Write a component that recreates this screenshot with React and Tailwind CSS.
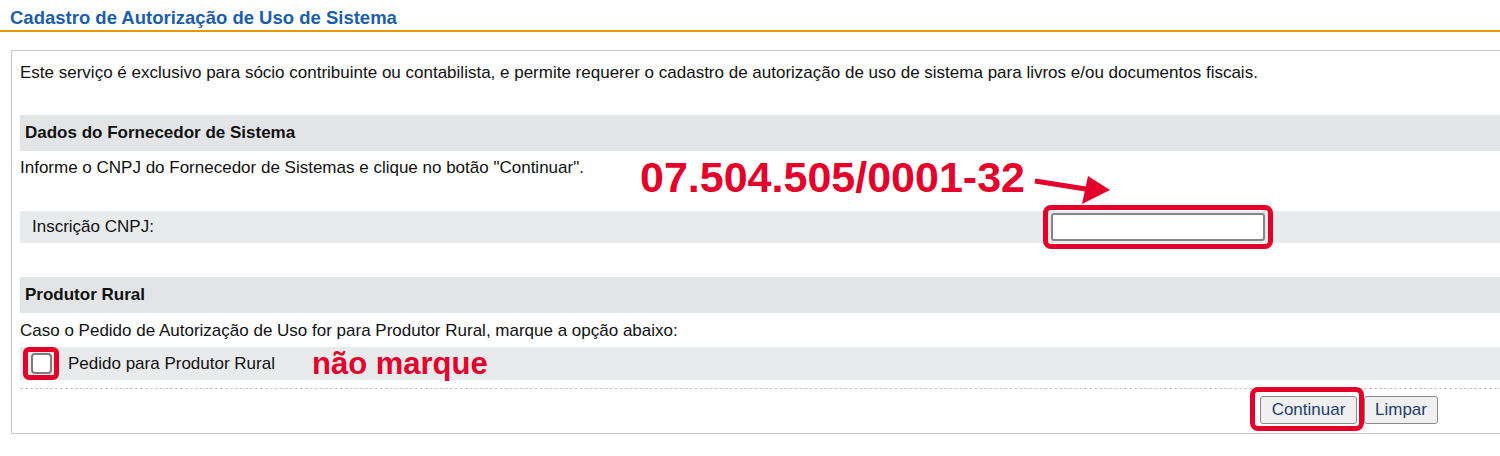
import React from "react";

const RED = "#e4002b";

export default function App() {
  return (
    <div
      className="relative w-[1500px] h-[456px] overflow-hidden bg-white text-[#111111]"
      style={{ fontFamily: '"Liberation Sans", Arial, sans-serif' }}
    >
      {/* Title */}
      <div className="h-[32px] border-b-2 border-[#e39b00] pl-[10px] pt-[7px] text-[18.5px] font-bold leading-[22px] text-[#1b5eab]">
        Cadastro de Autorização de Uso de Sistema
      </div>

      {/* Panel */}
      <div className="mt-[18px] ml-[11px] w-[1540px] h-[384px] border border-[#c8c8c8] px-[8px]">
        <p className="pt-[12px] text-[17px] leading-[20px]">
          Este serviço é exclusivo para sócio contribuinte ou contabilista, e permite requerer o cadastro de autorização de uso de sistema para livros e/ou documentos fiscais.
        </p>

        <div className="mt-[32px] h-[36px] bg-[#e3e4e6] px-[5px] flex items-center text-[17px] font-bold">
          Dados do Fornecedor de Sistema
        </div>

        <p className="mt-[7px] text-[17px] leading-[20px]">
          Informe o CNPJ do Fornecedor de Sistemas e clique no botão "Continuar".
        </p>

        <div className="mt-[33px] h-[32px] bg-[#e9eaec] flex items-center pl-[12px]">
          <span className="w-[1019px] shrink-0 text-[17px]">Inscrição CNPJ:</span>
          <span className="relative inline-block">
            <span className="block w-[214px] h-[28px] rounded-[3px] border-2 border-[#858585] bg-white" />
            <span className="absolute -inset-[8px] rounded-[8px] border-[5px] border-[#e4002b]" />
          </span>
        </div>

        <div className="mt-[34px] h-[36px] bg-[#e3e4e6] px-[5px] flex items-center text-[17px] font-bold">
          Produtor Rural
        </div>

        <p className="mt-[8px] text-[17px] leading-[20px]">
          Caso o Pedido de Autorização de Uso for para Produtor Rural, marque a opção abaixo:
        </p>

        <div className="mt-[6px] h-[33px] bg-[#e9eaec] flex items-center pl-[11px]">
          <span className="relative inline-block">
            <span className="block w-[21px] h-[21px] rounded-[4px] border-2 border-[#7d7d7d] bg-white" />
            <span className="absolute -left-[8px] -right-[7px] -top-[6px] -bottom-[6px] rounded-[6px] border-[5px] border-[#e4002b]" />
          </span>
          <span className="ml-[16px] text-[17px]">Pedido para Produtor Rural</span>
          <span className="ml-[37px] text-[31px] font-bold leading-[31px] text-[#e4002b]">não marque</span>
        </div>

        <div className="mt-[8px] border-t border-dashed border-[#c8c8c8]" />

        <div className="mt-[7px] flex pl-[1240px] gap-[7px]">
          <span className="relative inline-block">
            <button className="h-[28px] w-[97px] rounded-[3px] border border-[#8a8a8a] bg-[#f0f0f0] text-[17px] text-[#1d3f6e]">
              Continuar
            </button>
            <span className="absolute -left-[10px] -right-[7px] -top-[9px] -bottom-[7px] rounded-[8px] border-[5px] border-[#e4002b]" />
          </span>
          <button className="h-[28px] w-[74px] rounded-[3px] border border-[#8a8a8a] bg-[#f0f0f0] text-[17px] text-[#1d3f6e]">
            Limpar
          </button>
        </div>
      </div>

      {/* Annotation: CNPJ value */}
      <div
        className="absolute left-[640px] top-[156px] text-[43px] font-bold leading-[43px] whitespace-nowrap"
        style={{ color: RED }}
      >
        07.504.505/0001-32
      </div>
      <svg className="absolute left-0 top-0 pointer-events-none" width="1500" height="456">
        <line x1="1035" y1="181" x2="1092" y2="190" stroke={RED} strokeWidth="5" />
        <polygon points="1110,190 1088,176 1082,204" fill={RED} />
      </svg>
    </div>
  );
}
